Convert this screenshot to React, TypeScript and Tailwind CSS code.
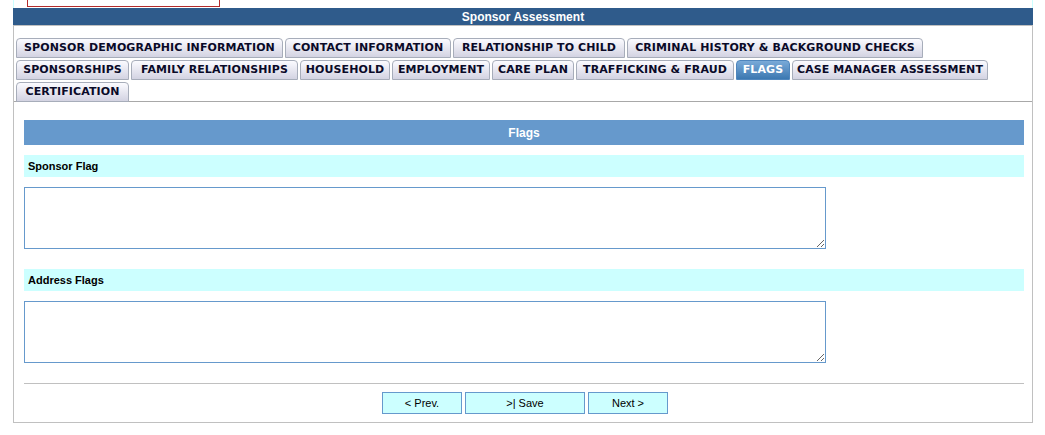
import React from "react";

type Tab = { label: string; w: string; active?: boolean };

const TAB_ROWS: Tab[][] = [
  [
    { label: "SPONSOR DEMOGRAPHIC INFORMATION", w: "w-[267px]" },
    { label: "CONTACT INFORMATION", w: "w-[166px]" },
    { label: "RELATIONSHIP TO CHILD", w: "w-[172px]" },
    { label: "CRIMINAL HISTORY & BACKGROUND CHECKS", w: "w-[296px]" },
  ],
  [
    { label: "SPONSORSHIPS", w: "w-[113px]" },
    { label: "FAMILY RELATIONSHIPS", w: "w-[167px]" },
    { label: "HOUSEHOLD", w: "w-[90px]" },
    { label: "EMPLOYMENT", w: "w-[98px]" },
    { label: "CARE PLAN", w: "w-[82px]" },
    { label: "TRAFFICKING & FRAUD", w: "w-[158px]" },
    { label: "FLAGS", w: "w-[54px]", active: true },
    { label: "CASE MANAGER ASSESSMENT", w: "w-[196px]" },
  ],
  [{ label: "CERTIFICATION", w: "w-[113px]" }],
];

function TabButton({ tab }: { tab: Tab }) {
  return (
    <div
      className={
        tab.w +
        " h-[20px] flex items-center justify-center pt-[1px] rounded-t-[4px] border text-[11px] font-bold tracking-[0.1px] font-['DejaVu_Sans',Verdana,sans-serif] " +
        (tab.active
          ? "border-[#4f86bd] bg-gradient-to-b from-[#7aaad8] to-[#3b78b1] text-white"
          : "border-[#a7adba] bg-gradient-to-b from-[#fbfbff] to-[#d3d3e2] text-[#0a0a28]")
      }
    >
      {tab.label}
    </div>
  );
}

function FieldBlock({ label }: { label: string }) {
  return (
    <div>
      <div className="h-[22px] bg-[#ccffff] flex items-center pl-[4px] text-[11px] font-bold text-black">
        {label}
      </div>
      <textarea className="mt-[10px] block w-[802px] h-[62px] border border-[#6699cc] bg-white outline-none" />
    </div>
  );
}

export default function App() {
  return (
    <div className="w-[1045px] h-[435px] bg-white font-['Liberation_Sans',Arial,sans-serif]">
      <div className="ml-[13px] w-[1020px]">
        {/* strip above the title */}
        <div className="h-[8px] border-x border-[#ccffff] pl-[13px]">
          <div className="w-[193px] h-[7px] border border-t-0 border-[#b22a2a]" />
        </div>

        <div className="h-[17px] bg-[#2f5b8b] flex items-center justify-center text-white text-[12px] font-bold">
          Sponsor Assessment
        </div>

        <div className="h-[398px] border border-[#c0c0c0]">
          {/* tabs */}
          <div className="pt-[12px] px-[1px] border-b border-[#a8a8a8] flex flex-col gap-[2px]">
            {TAB_ROWS.map((row, i) => (
              <div
                key={i}
                className={"flex gap-[2px] pl-[1px]" + (i === TAB_ROWS.length - 1 ? " -mb-[1px]" : "")}
              >
                {row.map((t) => (
                  <TabButton key={t.label} tab={t} />
                ))}
              </div>
            ))}
          </div>

          <div className="px-[10px] pt-[18px]">
            <div className="w-[1000px] h-[25px] bg-[#6699cc] flex items-center justify-center text-white text-[12px] font-bold">
              Flags
            </div>

            <div className="mt-[10px] w-[1000px]">
              <FieldBlock label="Sponsor Flag" />
            </div>
            <div className="mt-[20px] w-[1000px]">
              <FieldBlock label="Address Flags" />
            </div>

            <div className="mt-[20px] w-[1000px] border-t border-[#c0c0c0]" />

            <div className="mt-[8px] w-[1000px] pl-[2px] flex justify-center gap-[3px] text-[11px] text-black">
              <button className="w-[80px] h-[22px] border border-[#6699cc] bg-[#ccffff]">
                &lt; Prev.
              </button>
              <button className="w-[120px] h-[22px] border border-[#6699cc] bg-[#ccffff]">
                &gt;| Save
              </button>
              <button className="w-[80px] h-[22px] border border-[#6699cc] bg-[#ccffff]">
                Next &gt;
              </button>
            </div>
          </div>
        </div>
      </div>
    </div>
  );
}
